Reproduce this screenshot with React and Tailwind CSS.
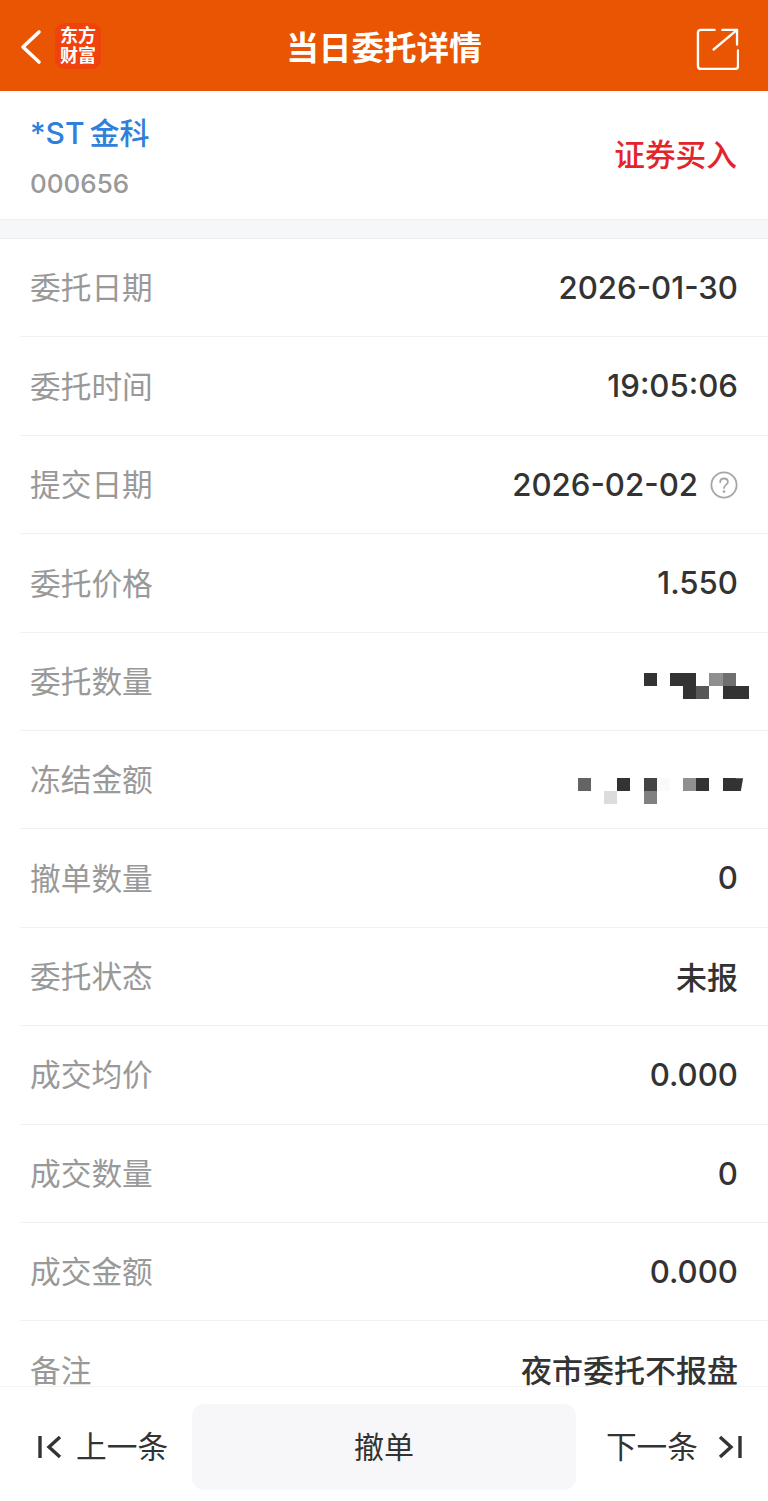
const font = { fontFamily: '"Inter", "Noto Sans CJK SC", sans-serif' };

// 打码的两行：每个色块 13px 见方
const qtyMosaic = [
    ['bg-[#333333]', '', 'bg-[#333333]', 'bg-[#333333]', '', 'bg-[#8f8f8f]', 'bg-[#6f6f6f]', ''],
    ['', '', '', 'bg-[#333333]', 'bg-[#585858]', '', 'bg-[#333333]', 'bg-[#333333]'],
];
const amountMosaic = [
    ['bg-[#646464]', '', '', 'bg-[#333333]', '', 'bg-[#444444]', 'bg-[#fafafa]', '', 'bg-[#909090]', 'bg-[#333333]', '', 'bg-[#333333]', 'bg-[#333333] [clip-path:polygon(0_0,55%_0,38%_100%,0_100%)]'],
    ['', '', 'bg-[#dcdcdc]', '', '', 'bg-[#808080]', '', '', '', '', '', '', ''],
];

const Mosaic = ({ rows, className }) => (
    <div className={`flex flex-col -mr-[11px] ${className}`}>
        {rows.map((row, i) => (
            <div key={i} className="flex">
                {row.map((c, j) => (
                    <div key={j} className={`w-[13.2px] h-[13px] ${c}`} />
                ))}
            </div>
        ))}
    </div>
);

const rows = [
    { label: '委托日期', value: '2026-01-30' },
    { label: '委托时间', value: '19:05:06' },
    { label: '提交日期', value: '2026-02-02', help: true },
    { label: '委托价格', value: '1.550' },
    { label: '委托数量', mosaic: qtyMosaic, offset: 'mt-[9px]' },
    { label: '冻结金额', mosaic: amountMosaic, offset: 'mt-[23px]' },
    { label: '撤单数量', value: '0' },
    { label: '委托状态', value: '未报', cjk: true },
    { label: '成交均价', value: '0.000' },
    { label: '成交数量', value: '0' },
    { label: '成交金额', value: '0.000' },
    { label: '备注', value: '夜市委托不报盘', cjk: true },
];

const Row = ({ row }) => (
    <div className="h-[98.4px] shrink-0 ml-[20px] pl-[10px] pr-[30px] flex items-center justify-between border-b border-[#f1f1f1]">
        <span className="text-[30.7px] leading-none text-[#999999] mt-[2px]">{row.label}</span>
        {row.mosaic ? (
            <Mosaic rows={row.mosaic} className={row.offset} />
        ) : (
            <span className={`flex items-center leading-none text-[#333333] mt-[2px] ${row.cjk ? 'text-[31px] font-medium' : 'text-[31.2px] font-[550]'}`}>
                {row.value}
                {row.help && (
                    <svg className="ml-[12px]" width="28" height="28" viewBox="0 0 28 28" fill="none" stroke="#a6a6a6" strokeWidth="1.8" strokeLinecap="round">
                        <circle cx="14" cy="14" r="12.6" />
                        <path d="M10.2 11.2c0-2.2 1.7-3.7 3.9-3.7 2.2 0 3.8 1.4 3.8 3.4 0 2.9-3.9 3-3.9 6.1" />
                        <circle cx="14" cy="20.6" r="0.5" fill="#a6a6a6" />
                    </svg>
                )}
            </span>
        )}
    </div>
);

const App = () => {
    return (
        <div className="w-[768px] h-[1501px] bg-white flex flex-col overflow-hidden" style={font}>
            <div className="h-[91px] shrink-0 bg-[#ea5504] flex items-center justify-between pl-[20px] pr-[29px] relative">
                <div className="flex items-center">
                    <svg className="mt-[3px]" width="24" height="36" viewBox="0 0 24 36" fill="none" stroke="white" strokeWidth="3.6" strokeLinecap="round" strokeLinejoin="round">
                        <path d="M19 3 3 18l16 15" />
                    </svg>
                    <div className="ml-[11px] w-[46px] h-[46px] rounded-[9px] bg-[#f0420c] flex flex-col items-center justify-center text-white text-[18px] leading-[20px] font-bold">
                        <span>东方</span>
                        <span>财富</span>
                    </div>
                </div>
                <span className="absolute left-0 right-0 text-center text-[32.6px] font-bold text-white leading-none mt-[5px]">当日委托详情</span>
                <svg className="mt-[6px]" width="43" height="43" viewBox="0 0 44 44" fill="none" stroke="white" strokeWidth="2.4" strokeLinecap="round" strokeLinejoin="round">
                    <path d="M19 3H5a3 3 0 0 0-3 3v34a3 3 0 0 0 3 3h35a3 3 0 0 0 3-3V24" />
                    <path d="M18 23 42 3" />
                    <path d="M27 3h15v15" />
                </svg>
            </div>

            <div className="h-[128px] shrink-0 pl-[30px] pr-[31px] flex items-center justify-between">
                <div className="flex flex-col mt-[4px]">
                    <span className="text-[#2f7fdb] text-[30px] leading-[36px] font-medium [word-spacing:-3px]">*ST 金科</span>
                    <span className="text-[#999999] text-[26px] leading-[30px] mt-[18px] font-medium">000656</span>
                </div>
                <span className="text-[#e1252b] text-[30.7px] leading-none font-medium">证券买入</span>
            </div>

            <div className="h-[20px] shrink-0 bg-[#f5f7f9] border-y border-[#eeeeee]" />

            <div className="flex-1 min-h-0 overflow-hidden">
                {rows.map((row) => (
                    <Row key={row.label} row={row} />
                ))}
            </div>

            <div className="h-[115px] shrink-0 bg-white border-t border-[#f3f3f3] flex items-center pt-[6px]">
                <div className="w-[192px] h-[86px] flex items-center pl-[38px] text-[#333333] text-[30.7px]">
                    <svg width="24" height="26" viewBox="0 0 24 26" fill="none" stroke="#333333" strokeWidth="3.4" strokeLinejoin="miter">
                        <path d="M2 2v22" />
                        <path d="M22 3 11 13l11 10" />
                    </svg>
                    <span className="ml-[14px] leading-none">上一条</span>
                </div>
                <div className="w-[384px] h-[86px] rounded-[12px] bg-[#f7f7fa] flex items-center justify-center text-[#333333] text-[30px]">
                    撤单
                </div>
                <div className="flex-1 h-[86px] flex items-center justify-end pr-[26px] text-[#333333] text-[30.7px]">
                    <span className="leading-none">下一条</span>
                    <svg className="ml-[20px]" width="24" height="26" viewBox="0 0 24 26" fill="none" stroke="#333333" strokeWidth="3.4" strokeLinejoin="miter">
                        <path d="M22 2v22" />
                        <path d="M2 3l11 10L2 23" />
                    </svg>
                </div>
            </div>
        </div>
    );
};

export default App;
